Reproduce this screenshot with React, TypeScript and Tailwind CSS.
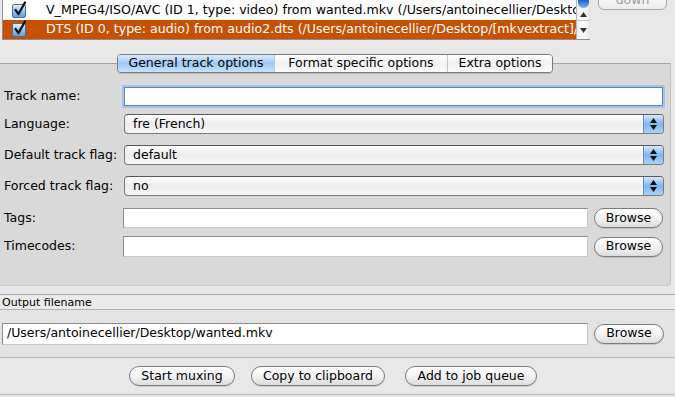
import type { ReactNode } from 'react';

function Check() {
  return (
    <div className="relative w-[14px] h-[14px] shrink-0">
      <div className="absolute inset-0 rounded-[2px] border border-[#4b6e9f] bg-linear-to-b from-[#e3efff] via-[#9cc4f2] to-[#5f9be3]" />
      <svg className="absolute -top-[3px] left-[1px]" width="14" height="16" viewBox="0 0 14 16">
        <path d="M2.5 9 L5.5 13 L12 1.5" fill="none" stroke="#111" strokeWidth="2.2" strokeLinecap="round" strokeLinejoin="round" />
      </svg>
    </div>
  );
}

function ListRow({ text, selected }: { text: string; selected?: boolean }) {
  return (
    <div
      className={`flex items-center h-[19px] pl-[9px] gap-[20px] whitespace-nowrap overflow-hidden ${
        selected ? 'bg-[#c75100] text-white' : 'text-black'
      }`}
    >
      <Check />
      <span className="text-[12.6px] leading-none">{text}</span>
    </div>
  );
}

function Stepper() {
  return (
    <div className="w-[20px] h-full rounded-r-[4px] border-l border-[#6b8ec4] bg-linear-to-b from-[#d6e8fc] via-[#7fb4ee] to-[#a9d2fb] flex flex-col items-center justify-center gap-[2px]">
      <svg width="7" height="5" viewBox="0 0 7 5"><path d="M3.5 0 L7 5 L0 5 Z" fill="#111" /></svg>
      <svg width="7" height="5" viewBox="0 0 7 5"><path d="M0 0 L7 0 L3.5 5 Z" fill="#111" /></svg>
    </div>
  );
}

function Select({ value }: { value: string }) {
  return (
    <div className="ml-[124px] w-[540px] h-[20px] flex rounded-[4px] border border-[#7a7a7a] border-t-[#5a5a5a] overflow-hidden bg-linear-to-b from-white via-[#ececec] to-[#f8f8f8]">
      <div className="flex-1 flex items-center pl-[8px] text-[12.5px]">{value}</div>
      <Stepper />
    </div>
  );
}

function Button({ children, className = '' }: { children: ReactNode; className?: string }) {
  return (
    <div
      className={`h-[20px] flex items-center justify-center rounded-full border border-[#7c7c7c] bg-linear-to-b from-white via-[#f4f4f4] to-[#dcdcdc] shadow-[0_1px_0_rgba(0,0,0,0.12)] text-[12.5px] ${className}`}
    >
      {children}
    </div>
  );
}

function Row({ label, children, className = '' }: { label: string; children: ReactNode; className?: string }) {
  return (
    <div className={`relative flex items-center ${className}`}>
      <span className="absolute left-[4px] text-[12.5px]">{label}</span>
      {children}
    </div>
  );
}

export default function App() {
  return (
    <div className="w-[675px] h-[397px] overflow-hidden bg-[#e8e8e8] text-black font-['DejaVu_Sans',sans-serif]">
      {/* track list */}
      <div className="flex h-[40px]">
        <div className="ml-[2px] w-[588px] flex bg-white border-l border-b border-[#8e8e8e]">
          <div className="flex-1 flex flex-col pt-[1px] overflow-hidden">
            <ListRow text="V_MPEG4/ISO/AVC (ID 1, type: video) from wanted.mkv (/Users/antoinecellier/Desktop/wanted.mkv)" />
            <ListRow selected text="DTS (ID 0, type: audio) from audio2.dts (/Users/antoinecellier/Desktop/[mkvextract]/audio2.dts)" />
          </div>
          <div className="w-[14px] border-l border-[#b9b9b9] bg-linear-to-r from-[#eeeeee] via-white to-[#e4e4e4] flex flex-col">
            <div className="h-[8px] mx-[1px] rounded-b-full bg-linear-to-b from-[#1f5fc6] to-[#7fb4f4]" />
            <div className="h-[13px] flex items-center justify-center border-b border-[#c4c4c4]">
              <svg width="7" height="5" viewBox="0 0 7 5"><path d="M3.5 0 L7 5 L0 5 Z" fill="#333" /></svg>
            </div>
            <div className="flex-1 flex items-center justify-center">
              <svg width="7" height="5" viewBox="0 0 7 5"><path d="M0 0 L7 0 L3.5 5 Z" fill="#333" /></svg>
            </div>
          </div>
        </div>
        <div className="ml-[8px] -mt-[10px] w-[69px] h-[20px] rounded-[6px] border border-[#a8a8a8] bg-linear-to-b from-white to-[#ececec] flex items-center justify-center text-[12.5px] text-[#9a9a9a]">
          down
        </div>
      </div>

      {/* options panel */}
      <div className="mt-[23px] w-[671px] h-[223px] bg-[#d9d9d9] border-t border-r border-b border-t-[#a5a5a5] border-r-[#c2c2c2] border-b-[#c9c9c9] rounded-br-[4px] flex flex-col">
        <div className="-mt-[10px] h-[19px] flex justify-center">
          <div className="flex rounded-[4px] border border-[#7b7b7b] overflow-hidden text-[12.5px] shadow-[0_1px_1px_rgba(0,0,0,0.15)]">
            <div className="w-[156px] flex items-center justify-center bg-linear-to-b from-[#dcecfd] via-[#9cc9f5] to-[#c6e3fd]">General track options</div>
            <div className="w-[173px] flex items-center justify-center border-l border-[#c5c5c5] bg-linear-to-b from-white via-[#f2f2f2] to-[#fbfbfb]">Format specific options</div>
            <div className="w-[105px] flex items-center justify-center border-l border-[#c5c5c5] bg-linear-to-b from-white via-[#f2f2f2] to-[#fbfbfb]">Extra options</div>
          </div>
        </div>

        <Row label="Track name:" className="mt-[12px] h-[23px]">
          <div className="ml-[122px] w-[543px] h-[23px] rounded-[2px] bg-[#a3c2ea] p-[2px]">
            <div className="w-full h-full bg-white border border-[#5a87c8]" />
          </div>
        </Row>
        <Row label="Language:" className="mt-[6px] h-[20px]">
          <Select value="fre (French)" />
        </Row>
        <Row label="Default track flag:" className="mt-[11px] h-[20px]">
          <Select value="default" />
        </Row>
        <Row label="Forced track flag:" className="mt-[11px] h-[20px]">
          <Select value="no" />
        </Row>
        <Row label="Tags:" className="mt-[12px] h-[20px]">
          <div className="ml-[123px] w-[465px] h-[20px] bg-white border border-[#8d8d8d] border-b-[#c9c9c9] border-r-[#c9c9c9]" />
          <Button className="ml-[6px] w-[69px]">Browse</Button>
        </Row>
        <Row label="Timecodes:" className="mt-[8px] h-[21px]">
          <div className="ml-[123px] w-[465px] h-[21px] bg-white border border-[#8d8d8d] border-b-[#c9c9c9] border-r-[#c9c9c9]" />
          <Button className="ml-[6px] w-[69px]">Browse</Button>
        </Row>
      </div>

      {/* output */}
      <div className="mt-[8px] border-t border-[#a9a9a9] bg-[#ebebeb] h-[15px] flex items-center pl-[2px] text-[11px] leading-none">
        Output filename
      </div>
      <div className="border-t border-[#b3b3b3] bg-[#e3e3e3] h-[48px] flex items-center">
        <div className="ml-[2px] w-[586px] h-[22px] bg-white border border-[#8d8d8d] border-b-[#c9c9c9] border-r-[#c9c9c9] flex items-center pl-[4px] text-[12.5px]">
          /Users/antoinecellier/Desktop/wanted.mkv
        </div>
        <Button className="ml-[6px] w-[70px] h-[19px]">Browse</Button>
      </div>
      <div className="border-t border-b border-[#b9b9b9] bg-[#e8e8e8] h-[38px] flex items-center pl-[129px]">
        <Button className="w-[106px] h-[19px]">Start muxing</Button>
        <Button className="ml-[16px] w-[134px] h-[19px]">Copy to clipboard</Button>
        <Button className="ml-[20px] w-[132px] h-[19px]">Add to job queue</Button>
      </div>
    </div>
  );
}
